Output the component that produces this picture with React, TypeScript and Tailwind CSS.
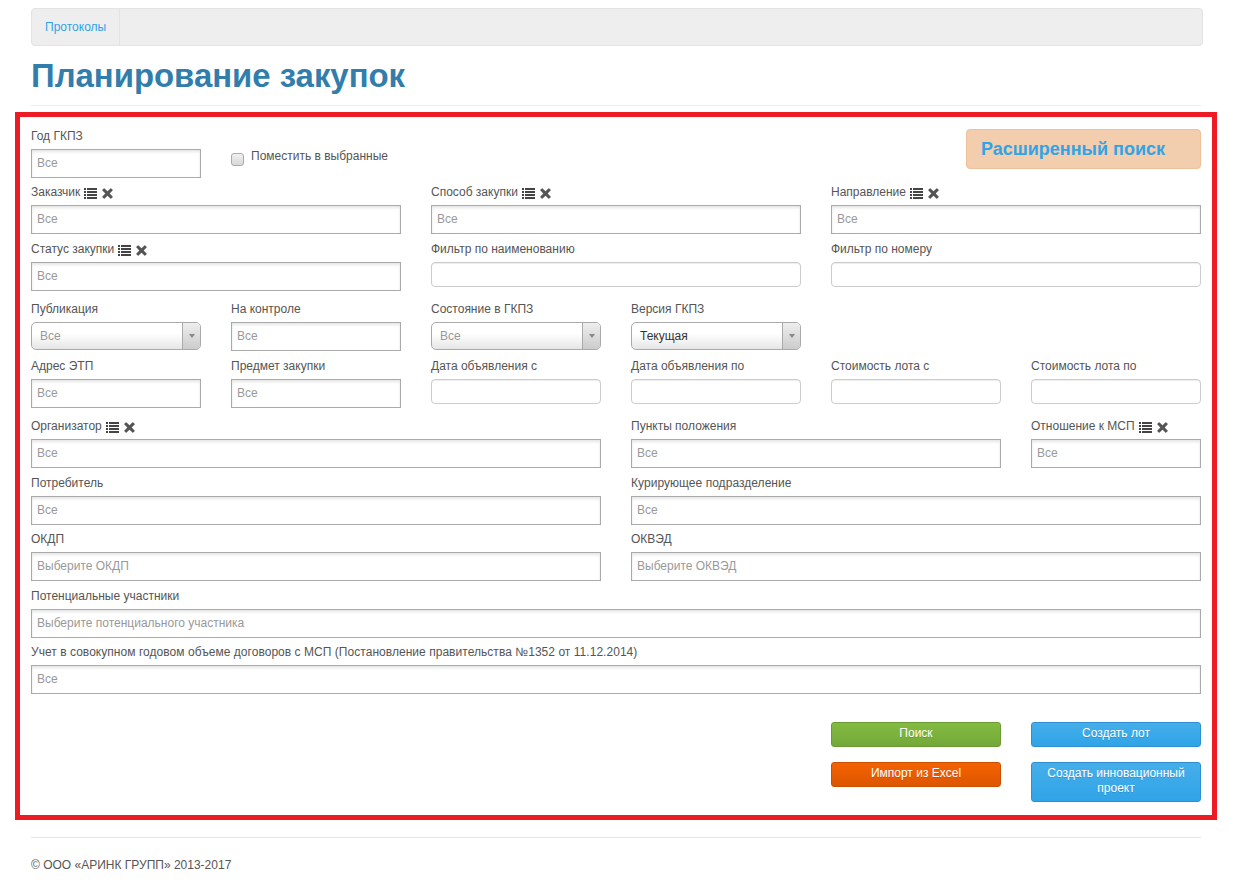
const ListIcon = () => (
  <svg width="13" height="12" viewBox="0 0 13 12" className="block fill-[#444]">
    <path d="M0 0h2v2H0zM3 0h10v2H3zM0 3h2v2H0zM3 3h10v2H3zM0 6h2v2H0zM3 6h10v2H3zM0 9h2v2H0zM3 9h10v2H3z" />
  </svg>
);

const RemoveIcon = () => (
  <svg width="11" height="11" viewBox="0 0 11 11" className="block fill-[#555]">
    <path d="M2.6.4 5.5 3.3 8.4.4q.4-.4.8 0l1.4 1.4q.4.4 0 .8L7.7 5.5l2.9 2.9q.4.4 0 .8l-1.4 1.4q-.4.4-.8 0L5.5 7.7 2.6 10.600q-.4.4-.8 0L.4 9.200q-.4-.4 0-.8l2.900-2.900L.4 2.600q-.4-.4 0-.8L1.800.4q.4-.4.800 0z" />
  </svg>
);

const Label = ({ text, icons, wide }: { text: string; icons?: boolean; wide?: boolean }) => (
  <label className={`flex h-[23px] items-start leading-[20px] text-[12px] text-[#555] whitespace-nowrap ${wide ? 'tracking-[0.04px]' : ''}`}>
    {text}
    {icons && (
      <span className="ml-[4px] flex items-start gap-[5px] pt-[6px]">
        <ListIcon />
        <RemoveIcon />
      </span>
    )}
  </label>
);

const Box = ({ placeholder = 'Все' }: { placeholder?: string }) => (
  <input
    readOnly
    placeholder={placeholder}
    className="block h-[29px] w-full border border-[#aaa] bg-white px-[5px] pb-[2px] text-[12px] shadow-[inset_0_2px_3px_rgba(0,0,0,0.1)] outline-none placeholder:text-[#999]"
  />
);

const Plain = () => (
  <input
    readOnly
    className="block h-[25px] w-full rounded-[4px] border border-[#ccc] bg-white shadow-[inset_0_1px_1px_rgba(0,0,0,0.075)] outline-none"
  />
);

const Select = ({ value, active }: { value: string; active?: boolean }) => (
  <div className="flex h-[28px] w-full overflow-hidden rounded-[5px] border border-[#aaa] bg-[linear-gradient(#fff_40%,#e6e6e6)] text-[12px]">
    <span className={`flex-1 pl-[8px] leading-[26px] ${active ? 'text-[#333]' : 'text-[#999]'}`}>{value}</span>
    <span className="flex w-[18px] items-center justify-center border-l border-[#aaa] bg-gradient-to-b from-[#eee] to-[#ccc]">
      <span className="h-0 w-0 border-x-[3px] border-t-[4px] border-x-transparent border-t-[#888]" />
    </span>
  </div>
);

const Row = ({ className, children }: { className: string; children: React.ReactNode }) => (
  <div className={`grid grid-cols-6 gap-x-[30px] ${className}`}>{children}</div>
);

const Button = ({ className, children }: { className: string; children: React.ReactNode }) => (
  <button className={`block w-full rounded-[3px] border px-[8px] pt-[3px] pb-[5px] text-center text-[12px] leading-[15px] text-white [text-shadow:0_1px_0_rgba(0,0,0,0.15)] ${className}`}>
    {children}
  </button>
);

const blue = 'border-[#2f8fd0] bg-gradient-to-b from-[#45aeea] to-[#2fa4e7]';

export default function App() {
  return (
    <div className="ml-[31px] w-[1170px] bg-white font-['Liberation_Sans',Arial,sans-serif] text-[#555]">
      <nav className="mr-[-2px] mt-[8px] flex h-[38px] rounded-[4px] border border-[#e3e3e3] bg-[#eee]">
        <a className="border-r border-[#e3e3e3] pl-[13px] pr-[13px] text-[12px] leading-[36px] text-[#2fa4e7]">Протоколы</a>
      </nav>
      <div className="mt-[10px] h-[50px] border-b border-[#eee]">
        <h1 className="text-[32.9px] font-bold leading-[40px] text-[#317eac]">Планирование закупок</h1>
      </div>

      <div className="mx-[-16px] mt-[6px] h-[708px] border-[5px] border-[#ed1c24] bg-white px-[11px] pt-[8px]">
        <Row className="">
          <div>
            <div className="h-[24px] pt-[1px]"><Label text="Год ГКПЗ" /></div>
            <Box />
          </div>
          <label className="mt-[21px] flex h-[20px] items-center text-[12px] whitespace-nowrap">
            <span className="mr-[7px] mt-[6px] h-[13px] w-[13px] rounded-[3px] border border-[#aaa] bg-gradient-to-b from-[#f0f0f0] to-[#d8d8d8]" />
            Поместить в выбранные
          </label>
          <div className="col-span-3" />
          <div className="ml-[-65px] mt-[4px] flex h-[40px] items-center whitespace-nowrap rounded-[4px] border border-[#f0c09a] bg-[#f2cdae] pl-[14px] text-[18px] font-bold text-[#2fa4e7]">
            Расширенный поиск
          </div>
        </Row>

        <Row className="mt-[4px]">
          <div className="col-span-2"><Label text="Заказчик" icons /><Box /></div>
          <div className="col-span-2"><Label text="Способ закупки" icons /><Box /></div>
          <div className="col-span-2"><Label text="Направление" icons /><Box /></div>
        </Row>

        <Row className="mt-[5px]">
          <div className="col-span-2"><Label text="Статус закупки" icons /><Box /></div>
          <div className="col-span-2"><Label text="Фильтр по наименованию" /><Plain /></div>
          <div className="col-span-2"><Label text="Фильтр по номеру" /><Plain /></div>
        </Row>

        <Row className="mt-[8px]">
          <div><Label text="Публикация" /><Select value="Все" /></div>
          <div><Label text="На контроле" /><Box /></div>
          <div><Label text="Состояние в ГКПЗ" /><Select value="Все" /></div>
          <div><Label text="Версия ГКПЗ" /><Select value="Текущая" active /></div>
        </Row>

        <Row className="mt-[5px]">
          <div><Label text="Адрес ЭТП" /><Box /></div>
          <div><Label text="Предмет закупки" /><Box /></div>
          <div><Label text="Дата объявления с" /><Plain /></div>
          <div><Label text="Дата объявления по" /><Plain /></div>
          <div><Label text="Стоимость лота с" /><Plain /></div>
          <div><Label text="Стоимость лота по" /><Plain /></div>
        </Row>

        <Row className="mt-[8px]">
          <div className="col-span-3"><Label text="Организатор" icons /><Box /></div>
          <div className="col-span-2"><Label text="Пункты положения" /><Box /></div>
          <div><Label text="Отношение к МСП" icons /><Box /></div>
        </Row>

        <Row className="mt-[5px]">
          <div className="col-span-3"><Label text="Потребитель" /><Box /></div>
          <div className="col-span-3"><Label text="Курирующее подразделение" wide /><Box /></div>
        </Row>

        <Row className="mt-[4px]">
          <div className="col-span-3"><Label text="ОКДП" /><Box placeholder="Выберите ОКДП" /></div>
          <div className="col-span-3"><Label text="ОКВЭД" /><Box placeholder="Выберите ОКВЭД" /></div>
        </Row>

        <Row className="mt-[5px]">
          <div className="col-span-6"><Label text="Потенциальные участники" /><Box placeholder="Выберите потенциального участника" /></div>
        </Row>

        <Row className="mt-[4px]">
          <div className="col-span-6">
            <Label text="Учет в совокупном годовом объеме договоров с МСП (Постановление правительства №1352 от 11.12.2014)" wide />
            <Box />
          </div>
        </Row>

        <Row className="mt-[28px] gap-y-[15px]">
          <div className="col-span-4" />
          <div><Button className="border-[#6a9a32] bg-gradient-to-b from-[#84bb42] to-[#73a839]">Поиск</Button></div>
          <div><Button className={blue}>Создать лот</Button></div>
          <div className="col-span-4" />
          <div><Button className="border-[#c85000] bg-gradient-to-b from-[#f56200] to-[#dd5600]">Импорт из Excel</Button></div>
          <div><Button className={blue}>Создать инновационный проект</Button></div>
        </Row>
      </div>

      <footer className="mt-[17px] border-t border-[#e5e5e5] pt-[17px] text-[12px] leading-[20px] text-[#555]">
        © ООО «АРИНК ГРУПП» 2013-2017
      </footer>
    </div>
  );
}
